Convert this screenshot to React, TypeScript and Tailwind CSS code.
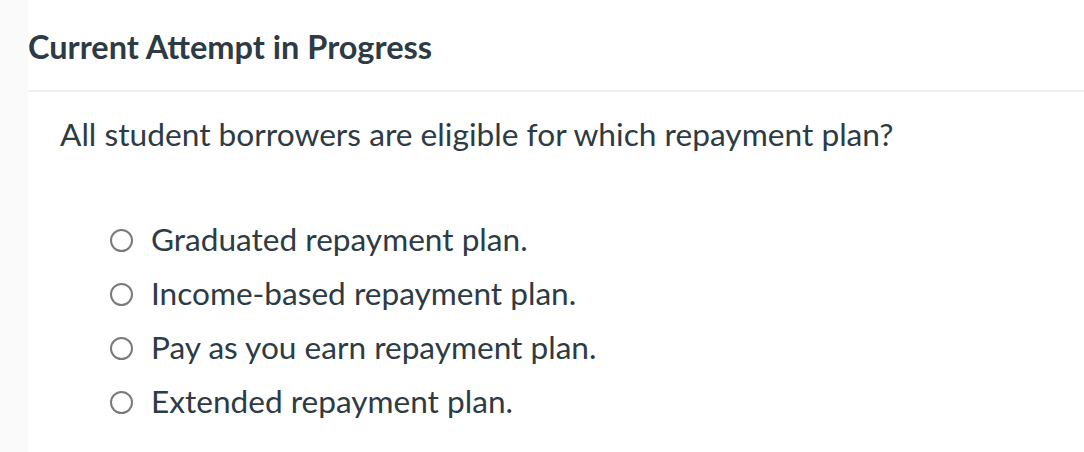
const options = [
  "Graduated repayment plan.",
  "Income-based repayment plan.",
  "Pay as you earn repayment plan.",
  "Extended repayment plan.",
];

export default function App() {
  return (
    <div className="flex h-[452px] w-[1084px] overflow-hidden bg-[#fafafa] font-['Lato',sans-serif] text-[#2d3b45]">
      <div className="w-[28px] shrink-0" />
      <main className="flex-1 bg-white">
        <h2 className="flex h-[90px] items-center pt-[4px] text-[32.5px] font-bold">Current Attempt in Progress</h2>
        <div className="h-[2px] bg-[#eeeeee]" />
        <p className="pl-[32px] pt-[22px] text-[31.7px] leading-[40px]">
          All student borrowers are eligible for which repayment plan?
        </p>
        <ul className="mt-[66px] flex flex-col gap-[14px] pl-[82px]">
          {options.map((opt) => (
            <li key={opt} className="flex h-[40px] items-center gap-[18px] text-[31.6px]">
              <span className="h-[23px] w-[23px] shrink-0 rounded-full border-2 border-[#7a7a7a] bg-white" />
              <span>{opt}</span>
            </li>
          ))}
        </ul>
      </main>
    </div>
  );
}
